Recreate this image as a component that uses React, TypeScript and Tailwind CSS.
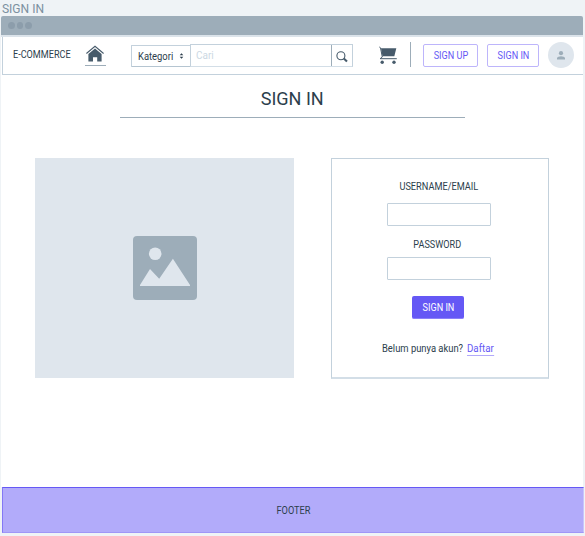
import React from "react";

function HomeIcon() {
  return (
    <svg width="20" height="17" viewBox="0 0 20 17" className="block">
      <path d="M1.4 8.5 10 1.3l8.6 7.2" fill="none" stroke="#475b6b" strokeWidth="1.1" />
      <path d="M3.4 8.9 10 3.4l6.6 5.5v7.6h-4.4v-4.2H8v4.2H3.4z" fill="#475b6b" />
    </svg>
  );
}

function CartIcon() {
  return (
    <svg width="19" height="19" viewBox="0 0 19 19" className="block">
      <path d="M.3 1 1.5 1.8l1.8 9.2-2.2 1.7H17.8" fill="none" stroke="#475b6b" strokeWidth="1" />
      <path d="M2 2.3h15.3l-2 8H3.5z" fill="#475b6b" />
      <circle cx="3.2" cy="16.3" r="1.7" fill="#475b6b" />
      <circle cx="15" cy="16.3" r="1.7" fill="#475b6b" />
    </svg>
  );
}

function SearchIcon() {
  return (
    <svg width="12" height="12" viewBox="0 0 12 12" className="block translate-y-px">
      <circle cx="4.9" cy="4.7" r="4" fill="none" stroke="#475b6b" strokeWidth="1.1" />
      <path d="m7.8 7.6 3.2 3" stroke="#475b6b" strokeWidth="2.1" />
    </svg>
  );
}

function Header() {
  return (
    <header className="flex h-[38px] items-start border-b border-l border-b-[#c3d1dc] border-l-[#c3d1dc] bg-white pl-[10px]">
      <div className="mt-[11px] w-[72px] origin-left scale-x-[0.91] text-[10px] leading-[14px] whitespace-nowrap">E-COMMERCE</div>
      <a className="mt-[8px] h-[21px] w-[21px] border-b border-[#9dadb9]">
        <HomeIcon />
      </a>
      <div className="mt-[8px] ml-[25px] flex h-[22px] w-[60px] items-center rounded-[1px] border border-[#c3d1dc] border-b-[#b5c5d1] pl-[6px] text-[10px]">
        <span className="w-[41px] origin-left scale-x-[0.94]">Kategori</span>
        <svg width="5" height="6" viewBox="0 0 5 6">
          <path d="M.7 2.2 2.5.3l1.8 1.9zM.7 3.8l1.8 1.9 1.8-1.9z" fill="#2c3e4c" />
        </svg>
      </div>
      <div className="mt-[7px] -ml-px flex h-[23px] w-[163px] border border-[#c3d1dc] border-b-[#d3dee7]">
        <div className="flex-1 pl-[5px] text-[10px] leading-[21px] text-[#ccd8e3]">Cari</div>
        <div className="flex w-[21px] items-center justify-center border-l border-[#9dadb9]">
          <SearchIcon />
        </div>
      </div>
      <div className="mt-[9px] ml-[26px]">
        <CartIcon />
      </div>
      <div className="mt-[5px] ml-[12px] h-[25px] w-px bg-[#9dadb9]" />
      <button className="mt-[7px] ml-[12px] h-[23px] w-[55px] rounded-[2px] border border-[#bdb5fb] text-[10px] leading-[21px] text-[#6558f5]">
        <span className="inline-block scale-x-[0.91] whitespace-nowrap">SIGN UP</span>
      </button>
      <button className="mt-[7px] ml-[9px] h-[23px] w-[52px] rounded-[2px] border border-[#bdb5fb] text-[10px] leading-[21px] text-[#6558f5]">
        <span className="inline-block scale-x-[0.91] whitespace-nowrap">SIGN IN</span>
      </button>
      <div className="mt-[5px] ml-[9px] flex h-[26px] w-[26px] items-center justify-center rounded-full bg-[#dfe6ed]">
        <svg width="8" height="9" viewBox="0 0 8 9">
          <circle cx="4" cy="2.2" r="2.1" fill="#9dadb9" />
          <path d="M0 8.5V6.8Q.8 5.2 4 5.2t4 1.6v1.7z" fill="#9dadb9" />
        </svg>
      </div>
    </header>
  );
}

function Picture() {
  return (
    <div className="flex h-[220px] w-[259px] items-center justify-center bg-[#dfe6ed]">
      <svg width="64" height="64" viewBox="0 0 64 64">
        <rect width="64" height="64" rx="4" fill="#9dadb9" />
        <circle cx="22.2" cy="17.7" r="6.3" fill="#dfe6ed" />
        <path d="M7 50v-1L17 33l9.2 9.7L39.9 22.8 57 49v1z" fill="#dfe6ed" />
      </svg>
    </div>
  );
}

function LoginCard() {
  return (
    <section className="ml-[37px] flex h-[221px] w-[218px] flex-col items-center border border-b-2 border-[#c3d1dc] border-b-[#d3dee7] pr-[2px] text-[10px] leading-[14px]">
      <label className="mt-[21px] scale-x-[0.92]">USERNAME/EMAIL</label>
      <div className="mt-[9px] h-[23px] w-[104px] rounded-[1px] border border-[#c3d1dc]" />
      <label className="mt-[12px] mr-[3px] scale-x-[0.91]">PASSWORD</label>
      <div className="mt-[5px] h-[23px] w-[104px] rounded-[1px] border border-[#c3d1dc]" />
      <button className="mt-[16px] mr-[2px] h-[23px] w-[52px] rounded-[2px] border-b border-[#8b80f8] bg-[#6558f5] pt-px text-[10px] text-white">
        <span className="inline-block scale-x-[0.91] whitespace-nowrap">SIGN IN</span>
      </button>
      <p className="mt-[22px] ml-[51px] flex w-[165px] whitespace-nowrap">
        <span className="w-[84.5px] origin-left scale-x-[0.94] leading-[15px]">Belum punya akun?</span>
        <a className="h-[15px] origin-left scale-x-[0.97] border-b border-[#b1a9fa] leading-[15px] text-[#6558f5]">Daftar</a>
      </p>
    </section>
  );
}

export default function App() {
  return (
    <div className="h-[536px] w-[585px] overflow-hidden bg-[#eff3f6] font-['Roboto','Liberation_Sans',sans-serif] text-[#2c3e4c]">
      <div className="h-[16px] origin-left scale-x-[0.965] pl-[2px] text-[12.5px] leading-[18px] text-[#7c90a0]">SIGN IN</div>
      <div className="ml-px w-[582px]">
        <div className="flex h-[19px] items-center gap-[2px] rounded-t-[2px] bg-[#9dadb9] pl-[7px]">
          <i className="size-[6.7px] rounded-full bg-[#8c9dab]" />
          <i className="size-[6.7px] rounded-full bg-[#8c9dab]" />
          <i className="size-[6.7px] rounded-full bg-[#8c9dab]" />
        </div>
        <div className="h-[2px] bg-[#dbe3ea]" />
        <div className="h-[450px] bg-white pl-px">
          <Header />
          <div className="ml-[118px] h-[43px] w-[345px] border-b border-[#9dadb9] pt-[11px] text-center text-[19px] leading-[25px]">
            <span className="inline-block scale-x-[0.95]">SIGN IN</span>
          </div>
          <main className="mt-[40px] ml-[33px] flex">
            <Picture />
            <LoginCard />
          </main>
        </div>
        <footer className="ml-px flex h-[46px] w-[582px] items-center justify-center border border-[#8378f6] border-t-[#6558f5] border-r-[#c9c4fb] border-b-[#a096f7] bg-[#b2abfa] text-[10px]">
          <span className="inline-block scale-x-[0.92]">FOOTER</span>
        </footer>
      </div>
    </div>
  );
}
